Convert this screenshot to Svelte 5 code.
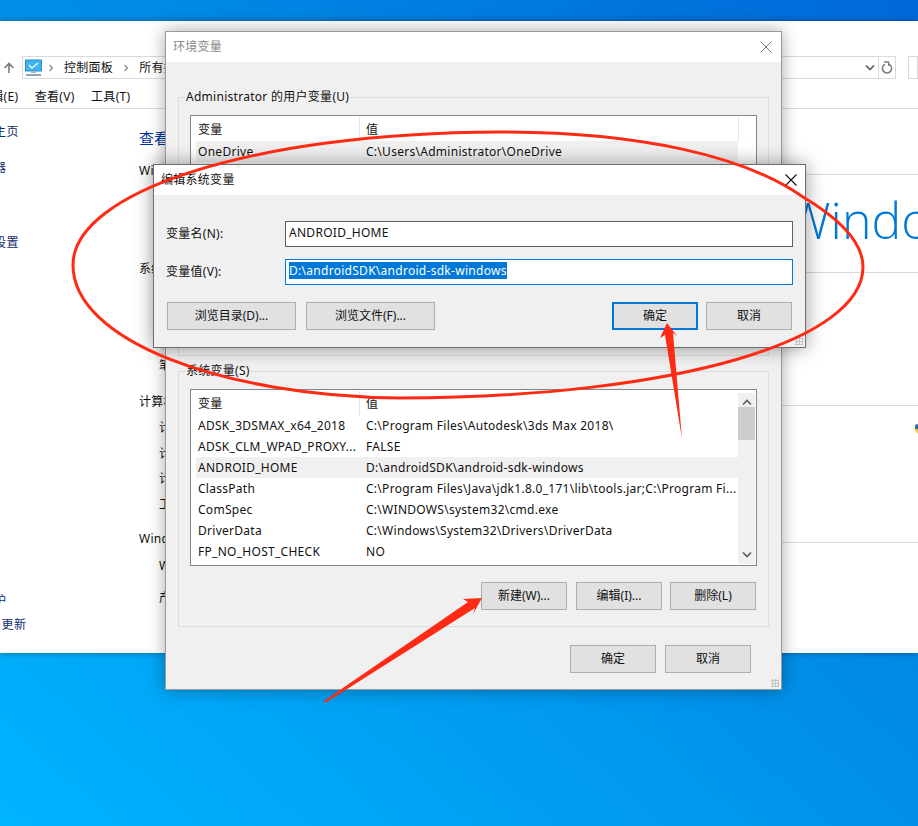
<script>
  const sysRows = [
    ['ADSK_3DSMAX_x64_2018', 'C:\\Program Files\\Autodesk\\3ds Max 2018\\'],
    ['ADSK_CLM_WPAD_PROXY...', 'FALSE'],
    ['ANDROID_HOME', 'D:\\androidSDK\\android-sdk-windows'],
    ['ClassPath', 'C:\\Program Files\\Java\\jdk1.8.0_171\\lib\\tools.jar;C:\\Program Fi...'],
    ['ComSpec', 'C:\\WINDOWS\\system32\\cmd.exe'],
    ['DriverData', 'C:\\Windows\\System32\\Drivers\\DriverData'],
    ['FP_NO_HOST_CHECK', 'NO']
  ];
  const userRows = [
    ['OneDrive', 'C:\\Users\\Administrator\\OneDrive'],
    ['Path', 'C:\\Users\\Administrator\\AppData\\Local\\Microsoft\\WindowsApps'],
    ['TEMP', 'C:\\Users\\Administrator\\AppData\\Local\\Temp'],
    ['TMP', 'C:\\Users\\Administrator\\AppData\\Local\\Temp']
  ];
</script>

<div class="desktop">
  <section class="explorer">
    <div class="addr-row">
      <svg class="up" viewBox="0 0 12 12" width="12" height="12"><path d="M6 11V1.5M1.5 6L6 1.5 10.5 6" fill="none" stroke="#7a7a7a" stroke-width="1.6"/></svg>
      <div class="addr">
        <svg class="pc" viewBox="0 0 17 18" width="17" height="18">
          <rect x="0.5" y="1" width="16" height="11" fill="#3fb4ee" stroke="#2a8fc9"/>
          <path d="M4 6l3 3 6-5" fill="none" stroke="#e8f8ff" stroke-width="1.4"/>
          <rect x="6" y="12" width="5" height="2" fill="#9db4c4"/>
          <rect x="1" y="15" width="15" height="2" fill="#8ea3b3"/>
        </svg>
        <svg class="crumb" viewBox="0 0 6 8" width="6" height="8"><path d="M1.5 1l3 3-3 3" fill="none" stroke="#8c8c8c" stroke-width="1.3"/></svg>
        <span>控制面板</span>
        <svg class="crumb" viewBox="0 0 6 8" width="6" height="8"><path d="M1.5 1l3 3-3 3" fill="none" stroke="#8c8c8c" stroke-width="1.3"/></svg>
        <span>所有控制面板项</span>
        <svg class="drop" viewBox="0 0 10 7" width="10" height="7"><path d="M1 1.500l4 4 4-4" fill="none" stroke="#606060" stroke-width="1.7"/></svg>
        <div class="refresh">
          <svg viewBox="0 0 12 13" width="12" height="13"><path d="M4 3.300a4.600 4.600 0 1 0 4 0" fill="none" stroke="#7a7a7a" stroke-width="1.5"/><path d="M3.200 1h4.400v4" fill="none" stroke="#7a7a7a" stroke-width="1.3"/></svg>
        </div>
      </div>
      <div class="search"></div>
    </div>
    <nav class="menu">
      <span>编辑(E)</span><span>查看(V)</span><span>工具(T)</span>
    </nav>
    <div class="content">
      <aside class="side">
        <a class="s1">控制面板主页</a>
        <a class="s2">设备管理器</a>
        <a class="s3">高级系统设置</a>
        <a class="s4">安全和维护</a>
        <a class="s5">Windows 更新</a>
      </aside>
      <main class="main">
        <h1>查看有关计算机的基本信息</h1>
        <div class="sec sec1">
          <div class="head"><span>Windows 版本</span><i></i></div>
          <div class="logo">Windows 10</div>
        </div>
        <div class="sec sec2">
          <div class="head"><span>系统</span><i></i></div>
          <div class="row pen">笔和触控:</div>
        </div>
        <div class="sec sec3">
          <div class="head"><span>计算机名、域和工作组设置</span><i></i></div>
          <div class="rows">
            <div class="row">计算机名:</div>
            <div class="row">计算机全名:</div>
            <div class="row">计算机描述:</div>
            <div class="row">工作组:</div>
          </div>
          <svg class="shield" viewBox="0 0 12 12" width="12" height="12"><path d="M6 .5L11 2v4c0 3-2.500 4.800-5 5.500C3.500 10.800 1 9 1 6V2z" fill="#f2c230"/><path d="M6 .5L1 2v4h5zM6 6v5.500c2.500-.7 5-2.500 5-5.500z" fill="#2f6fb5"/></svg>
        </div>
        <div class="sec">
          <div class="head"><span>Windows 激活</span><i></i></div>
          <div class="row act1">Windows 已激活</div>
          <div class="row act2">产品 ID</div>
        </div>
      </main>
    </div>
  </section>

  <section class="dlg env">
    <header class="title dim">
      <span>环境变量</span>
      <svg class="x" viewBox="0 0 12 12" width="12" height="12"><path d="M.5.5l11 11M11.500.5l-11 11" stroke="#777" stroke-width="1"/></svg>
    </header>
    <div class="env-body">
      <fieldset class="group g1">
        <legend>Administrator 的用户变量(U)</legend>
        <div class="list">
          <div class="table">
            <div class="thead"><span>变量</span><span>值</span></div>
            {#each userRows as r, i}
              <div class="tr" class:sel={i === 0}><span>{r[0]}</span><span>{r[1]}</span></div>
            {/each}
          </div>
          <div class="hdrfill"></div>
        </div>
      </fieldset>
      <fieldset class="group g2">
        <legend>系统变量(S)</legend>
        <div class="list">
          <div class="table">
            <div class="thead"><span>变量</span><span>值</span></div>
            {#each sysRows as r, i}
              <div class="tr" class:sel={i === 2}><span>{r[0]}</span><span>{r[1]}</span></div>
            {/each}
          </div>
          <div class="scroll">
            <svg viewBox="0 0 10 7" width="10" height="7"><path d="M1 5.500l4-4 4 4" fill="none" stroke="#606060" stroke-width="1.7"/></svg>
            <div class="thumb"></div>
            <svg class="dn" viewBox="0 0 10 7" width="10" height="7"><path d="M1 1.500l4 4 4-4" fill="none" stroke="#606060" stroke-width="1.7"/></svg>
          </div>
        </div>
        <div class="btns">
          <button>新建(W)...</button><button>编辑(I)...</button><button class="tight">删除(L)</button>
        </div>
      </fieldset>
      <div class="foot">
        <button>确定</button><button>取消</button>
      </div>
    </div>
    <div class="grip"></div>
  </section>

  <section class="dlg edit">
    <header class="title">
      <span>编辑系统变量</span>
      <svg class="x" viewBox="0 0 12 12" width="12" height="12"><path d="M.5.5l11 11M11.500.5l-11 11" stroke="#111" stroke-width="1.100"/></svg>
    </header>
    <div class="edit-body">
      <div class="field">
        <span class="lbl">变量名(N):</span>
        <div class="input">ANDROID_HOME</div>
      </div>
      <div class="field">
        <span class="lbl">变量值(V):</span>
        <div class="input focus"><span class="selected">D:\androidSDK\android-sdk-windows</span></div>
      </div>
      <div class="actions">
        <button class="wide">浏览目录(D)...</button>
        <button class="wide">浏览文件(F)...</button>
        <span class="grow"></span>
        <button class="ok">确定</button>
        <button>取消</button>
      </div>
    </div>
    <div class="grip"></div>
  </section>

  <svg class="marks" viewBox="0 0 918 826" width="918" height="826">
    <path d="M73 265C73 193 247 133 500 132C640 132 745 156 803 197C845 222 863 245 863 267C863 340 680 397 400 398C220 396 73 340 73 265Z" fill="none" stroke="#ff2a14" stroke-width="3"/>
    <polygon points="667,323 677,336 673,333 682,439 665,335 660,338" fill="#ff2a14"/>
    <polygon points="482,598 463,599 468,602 324,701 325,703 475,608 473,614" fill="#ff2a14"/>
  </svg>
</div>

<style>
  :global(body) { margin: 0; }
  .desktop {
    position: relative;
    width: 918px;
    height: 826px;
    overflow: hidden;
    background: linear-gradient(to bottom left, #0068d8 0%, #0090e8 50%, #00b4ff 100%);
    font-family: "Noto Sans", "Noto Sans CJK SC", sans-serif;
    font-size: 12px;
    letter-spacing: .28px;
    line-height: 20px;
    color: #111;
  }
  svg { display: block; flex: none; }

  .explorer {
    position: absolute;
    left: 0; top: 21px;
    width: 918px;
    height: 632px;
    background: #fff;
    overflow: hidden;
    box-shadow: 0 0 6px rgba(0,0,0,.4);
  }
  .addr-row { display: flex; align-items: center; height: 23px; margin-top: 35px; }
  .up { margin: 0 7px 0 3px; }
  .addr {
    display: flex; align-items: center; gap: 10px;
    width: 874px; height: 23px; box-sizing: border-box;
    border: 1px solid #d9d9d9; padding-left: 2px;
  }
  .pc { margin-right: -4px; }
  .drop { margin-left: auto; }
  .refresh { display: flex; align-items: center; justify-content: center; width: 16px; height: 21px; border-left: 1px solid #d9d9d9; margin-left: -7px; }
  .search { flex: 1; height: 23px; box-sizing: border-box; border: 1px solid #d9d9d9; margin-left: 12px; }

  .menu { display: flex; gap: 16.5px; height: 30px; box-sizing: border-box; align-items: center; padding-top: 7px; margin-left: -21px; border-bottom: 1px solid #dcdcdc; }

  .content { display: grid; grid-template-columns: 139px 1fr; }
  .side { display: flex; flex-direction: column; margin-left: -55px; color: #102a70; white-space: nowrap; }
  .s1 { margin-top: 13px; }
  .s2 { margin-top: 16px; }
  .s3 { margin-top: 55px; }
  .s4 { margin-top: 338px; }
  .s5 { margin-top: 4px; }

  .main h1 { margin: 18px 0 12px; font-size: 15px; line-height: 22px; font-weight: 400; color: #003399; white-space: nowrap; }
  .sec { position: relative; }
  .sec1 { height: 98px; }
  .sec2 { height: 133px; }
  .sec3 { height: 137px; }
  .head { display: flex; align-items: center; gap: 8px; white-space: nowrap; }
  .head i { flex: 1; height: 1px; margin-top: 6px; background: #d9d9d9; }
  .row { margin-left: 20px; white-space: nowrap; }
  .pen { margin-top: 77px; }
  .rows { display: flex; flex-direction: column; gap: 5.67px; margin-top: 6px; }
  .act1 { margin-top: 7px; }
  .act2 { margin-top: 12px; }
  .logo {
    margin: 9px 0 0 647px;
    font-family: "Open Sans", sans-serif;
    font-weight: 300;
    font-size: 50px;
    letter-spacing: 0;
    line-height: 60px;
    color: #0078d7;
    white-space: nowrap;
  }
  .shield { position: absolute; left: 775px; top: 31px; }

  .dlg {
    position: absolute;
    box-sizing: border-box;
    background: #f0f0f0;
    display: flex;
    flex-direction: column;
  }
  .env {
    left: 165px; top: 31px; width: 617px; height: 659px;
    border: 1px solid #9a9a9a;
    box-shadow: 0 0 16px rgba(0,0,0,.35);
  }
  .edit {
    left: 153px; top: 164px; width: 653px; height: 184px;
    border: 1px solid #6e6e6e;
    box-shadow: 0 0 18px rgba(0,0,0,.4);
  }
  .title {
    flex: none;
    display: flex; align-items: center; justify-content: space-between;
    height: 30px; background: #fff;
    padding: 0 8px 0 7px;
  }
  .title.dim { color: #8a8a8a; }
  .env .title .x { margin-right: 1px; }
  .env-body { padding: 35px 12px 0; }
  .group {
    margin: 0; min-width: 0;
    box-sizing: border-box;
    border: 1px solid #dcdcdc;
    padding: 0 11px;
  }
  .group legend { padding: 0; margin-left: -4px; line-height: 16px; white-space: nowrap; }
  .g1 { height: 267px; margin-top: -8px; }
  .g2 { height: 264px; margin-top: 7px; }
  .list {
    display: flex;
    box-sizing: border-box;
    border: 1px solid #82878f;
    background: #fff;
    padding: 1px 1px 1px 5px;
  }
  .g1 .list { margin-top: 10px; height: 230px; }
  .g2 .list { margin-top: 10px; height: 177px; }
  .table { width: 542px; flex: none; }
  .thead, .tr { display: grid; grid-template-columns: 163px 1fr; height: 21px; line-height: 21px; white-space: nowrap; }
  .thead { height: 24px; line-height: 25px; }
  .thead span { padding-left: 2px; }
  .thead span + span { border-left: 1px solid #e5e5e5; padding-left: 6px; }
  .tr span { padding-left: 2px; overflow: hidden; }
  .tr span + span { padding-left: 7px; }
  .sel { background: #f0f0f0; }
  .hdrfill { flex: none; width: 18px; height: 24px; border-left: 1px solid #e5e5e5; }
  .scroll {
    flex: 1; display: flex; flex-direction: column; align-items: center;
    background: #f0f0f0; margin-top: 2px;
    padding-top: 6px; height: 171px; box-sizing: border-box;
  }
  .thumb { align-self: stretch; height: 33px; margin-top: 1px; background: #cdcdcd; }
  .scroll .dn { margin-top: auto; margin-bottom: 6px; }

  button {
    font: inherit; color: #111;
    width: 86px; height: 28px;
    padding: 0;
    background: #e1e1e1;
    border: 1px solid #adadad;
    border-radius: 0;
  }
  .btns { display: flex; justify-content: flex-end; gap: 9px; margin-top: 16px; padding-right: 1px; }
  .btns .tight { margin-left: -1px; }
  .foot { display: flex; justify-content: flex-end; gap: 9px; margin-top: 18px; padding-right: 18px; }

  .edit-body { padding: 26px 12px 0; }
  .field { display: flex; align-items: center; height: 26px; margin-bottom: 12px; }
  .lbl { width: 119px; line-height: 22px; }
  .input {
    box-sizing: border-box; width: 508px; height: 26px;
    border: 1px solid #5f5f5f; background: #fff;
    padding-left: 3px; line-height: 22px; white-space: nowrap;
  }
  .focus { border-color: #0078d7; padding-top: 2px; line-height: 17px; }
  .selected { display: inline-block; background: #0078d7; color: #fff; }
  .actions { display: flex; gap: 10px; margin-top: 17px; margin-left: 1px; }
  .actions .wide { width: 129px; }
  .actions .grow { flex: 1; }
  .actions .ok { border: 2px solid #0078d7; margin-right: -2px; }
  .actions button:last-child { margin-right: 1px; }

  .grip {
    position: absolute; right: 2px; bottom: 2px;
    width: 8px; height: 8px;
    background-image: radial-gradient(#c2c2c2 1px, transparent 1.2px);
    background-size: 3px 3px;
  }
  .marks { position: absolute; left: 0; top: 0; pointer-events: none; }
</style>
